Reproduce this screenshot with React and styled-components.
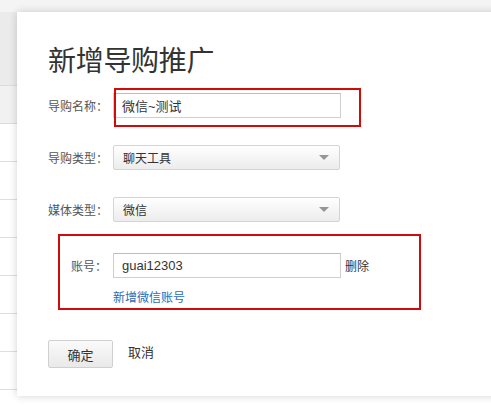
import React from 'react';
import styled, {createGlobalStyle} from 'styled-components';

const GlobalStyle = createGlobalStyle`
  html, body {
    margin: 0;
    padding: 0;
    background: #f4f4f4;
  }
  body {
    font-family: "Liberation Sans", "Noto Sans CJK SC", sans-serif;
    color: #333;
  }
`;

const rowLines = [0, 1, 2, 3, 4, 5, 6, 7];

function App() {
  return (
    <Page>
      <GlobalStyle/>
      <Backdrop>
        <TopStrip/>
        <TableHead/>
        <SubHead/>
        {rowLines.map(i => <TableRow key={i}/>)}
      </Backdrop>
      <Modal>
        <Title>新增导购推广</Title>
        <Form>
          <Row>
            <Label>导购名称：</Label>
            <Field>
              <Input defaultValue="微信~测试"/>
              <Highlight/>
            </Field>
          </Row>
          <Row>
            <Label>导购类型：</Label>
            <Select>
              <span>聊天工具</span>
              <Caret/>
            </Select>
          </Row>
          <Row>
            <Label>媒体类型：</Label>
            <Select>
              <span>微信</span>
              <Caret/>
            </Select>
          </Row>
          <AccountBox>
            <Row>
              <Label narrow>账号：</Label>
              <Input defaultValue="guai12303"/>
              <Remove>删除</Remove>
            </Row>
            <AddLink>新增微信账号</AddLink>
          </AccountBox>
          <Actions>
            <Button>确定</Button>
            <Cancel>取消</Cancel>
          </Actions>
        </Form>
      </Modal>
    </Page>
  );
}

const Page = styled.div`
  position: relative;
  width: 491px;
  height: 407px;
  overflow: hidden;
  background: #f4f4f4;
`;

const Backdrop = styled.div`
  display: flex;
  flex-direction: column;
  width: 100%;
`;

const TopStrip = styled.div`
  height: 12px;
  background: #f4f4f4;
`;

const TableHead = styled.div`
  height: 73px;
  background: #ebebeb;
  border-bottom: 1px solid #dcdcdc;
`;

const SubHead = styled.div`
  height: 37px;
  background: #f1f1f1;
  border-bottom: 1px solid #dcdcdc;
`;

const TableRow = styled.div`
  height: 37px;
  background: #fff;
  border-bottom: 1px solid #dedede;
`;

const Modal = styled.div`
  position: absolute;
  left: 17px;
  top: 12px;
  width: 490px;
  height: 384px;
  background: #fff;
  box-shadow: 0 0 8px rgba(0, 0, 0, 0.18);
  padding: 30px 0 0 31px;
  box-sizing: border-box;
`;

const Title = styled.h1`
  margin: 0;
  font-family: "Noto Sans CJK SC", sans-serif;
  font-weight: normal;
  font-size: 28px;
  line-height: 35px;
  color: #333;
  letter-spacing: -0.3px;
`;

const Form = styled.div`
  display: flex;
  flex-direction: column;
  margin-top: 16px;
`;

const Row = styled.div`
  display: flex;
  align-items: center;
  height: 25px;
  & + & {
    margin-top: 27px;
  }
`;

const Label = styled.div`
  width: ${p => (p.narrow ? '47px' : '59px')};
  margin-right: 6px;
  text-align: right;
  font-size: 12px;
  color: #555;
  white-space: nowrap;
  font-family: "Noto Sans CJK SC", sans-serif;
`;

const Field = styled.div`
  position: relative;
`;

const Input = styled.input`
  width: 228px;
  height: 25px;
  box-sizing: border-box;
  border: 1px solid #cfcfcf;
  border-top-color: #bdbdbd;
  padding: 0 8px;
  font-size: 13px;
  font-family: "Liberation Sans", "Noto Sans CJK SC", sans-serif;
  color: #333;
  outline: none;
  background: #fff;
`;

const Highlight = styled.div`
  position: absolute;
  left: 1px;
  top: -5px;
  width: 247px;
  height: 39px;
  box-sizing: border-box;
  border: 2px solid #d20a0a;
  pointer-events: none;
`;

const Select = styled.div`
  width: 227px;
  height: 25px;
  box-sizing: border-box;
  border: 1px solid #d4d4d4;
  border-radius: 2px;
  background: linear-gradient(#ffffff, #ececec);
  display: flex;
  align-items: center;
  justify-content: space-between;
  padding: 0 10px 0 9px;
  font-size: 12px;
  color: #333;
  font-family: "Noto Sans CJK SC", sans-serif;
`;

const Caret = styled.span`
  width: 0;
  height: 0;
  border-left: 5px solid transparent;
  border-right: 5px solid transparent;
  border-top: 5px solid #969696;
`;

const AccountBox = styled.div`
  margin: 12px 0 0 10px;
  width: 363px;
  height: 76px;
  box-sizing: border-box;
  border: 2px solid #d20a0a;
  padding-top: 17px;
`;

const Remove = styled.span`
  margin-left: 4px;
  font-size: 12px;
  color: #333;
  font-family: "Noto Sans CJK SC", sans-serif;
`;

const AddLink = styled.a`
  display: block;
  margin: 11px 0 0 53px;
  font-size: 12px;
  line-height: 16px;
  color: #2d6bb5;
  cursor: pointer;
  font-family: "Noto Sans CJK SC", sans-serif;
`;

const Actions = styled.div`
  display: flex;
  align-items: center;
  margin-top: 30px;
`;

const Button = styled.button`
  width: 65px;
  height: 28px;
  border: 1px solid #d0d0d0;
  border-radius: 2px;
  background: linear-gradient(#fafafa, #e9e9e9);
  font-size: 13px;
  color: #333;
  font-family: "Noto Sans CJK SC", sans-serif;
  padding: 0;
`;

const Cancel = styled.span`
  margin-left: 15px;
  padding-bottom: 5px;
  font-size: 13px;
  color: #333;
  font-family: "Noto Sans CJK SC", sans-serif;
`;

export default App;
